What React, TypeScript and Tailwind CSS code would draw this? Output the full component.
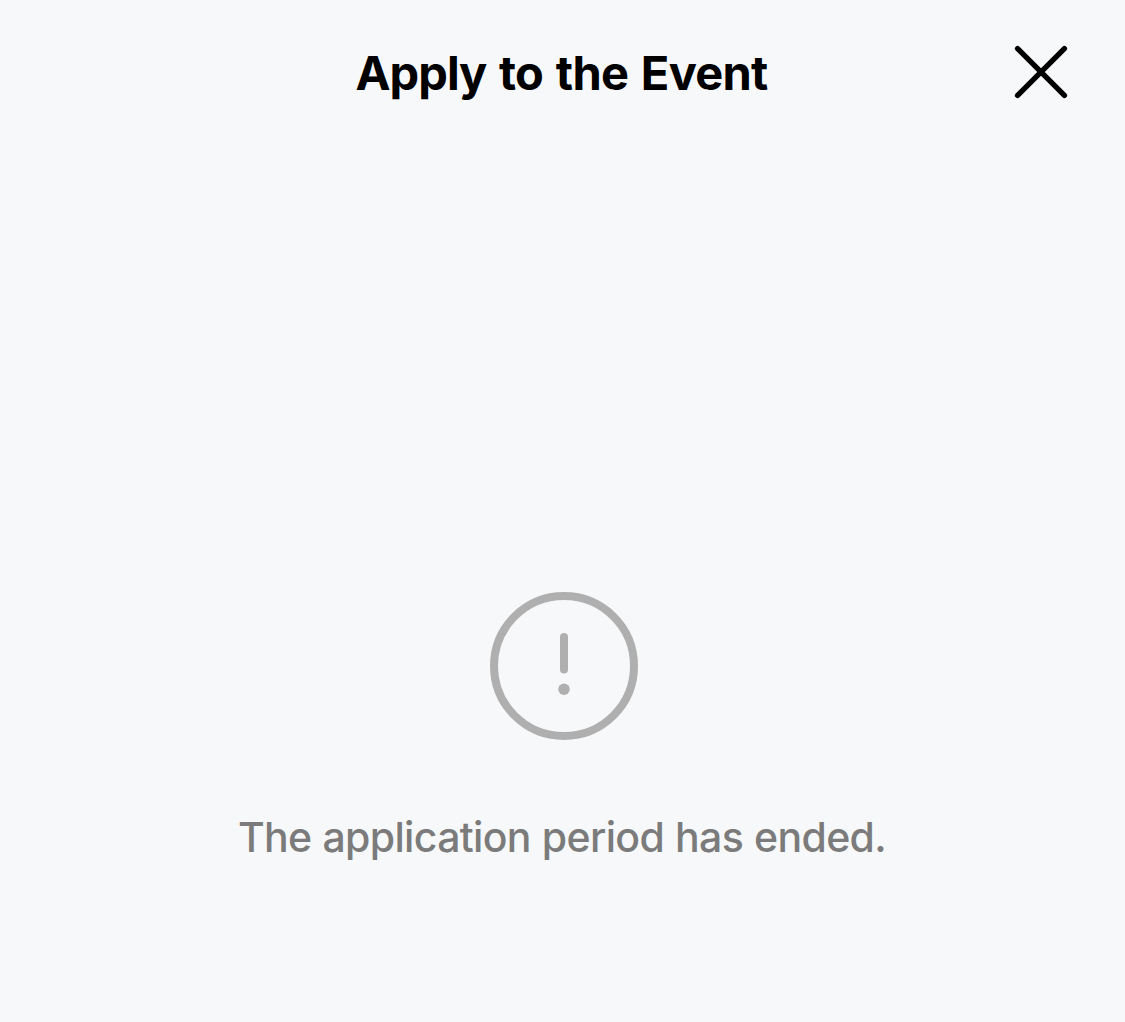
export default function App() {
  return (
    <main className="flex h-[1022px] w-full flex-col bg-[#f7f8fa] font-['Inter',sans-serif]">
      <header className="grid h-36 grid-cols-[1fr_auto_1fr] items-center">
        <h1 className="col-start-2 pt-[2px] pr-[2px] text-[47px] leading-[60px] font-bold tracking-[-0.75px] [word-spacing:2.3px] whitespace-nowrap text-black">
          <span className="tracking-[-1px]">Apply</span> to the Event
        </h1>
        <button aria-label="Close" className="mr-[56px] justify-self-end">
          <svg className="block h-14 w-14" viewBox="0 0 56 56" fill="none" stroke="#000" strokeWidth="5.4" strokeLinecap="round">
            <path d="M4.6 4.6 51.4 51.4M51.4 4.6 4.6 51.4" />
          </svg>
        </button>
      </header>
      <section className="flex flex-col items-center pt-[448px]">
        <svg className="ml-[3px] block h-[148px] w-[148px]" viewBox="0 0 148 148" fill="none" stroke="#afafaf" strokeWidth="8">
          <circle cx="74" cy="74" r="70" />
          <path d="M74 45v32.5" strokeLinecap="round" />
          <circle cx="74" cy="97.3" r="5.75" fill="#afafaf" stroke="none" />
        </svg>
        <p className="mt-[67px] pr-[1px] text-[41px] leading-[60px] font-medium tracking-[-0.66px] [word-spacing:0.7px] whitespace-nowrap text-[#7b7b7b]">
          The application period has ended.
        </p>
      </section>
    </main>
  );
}
